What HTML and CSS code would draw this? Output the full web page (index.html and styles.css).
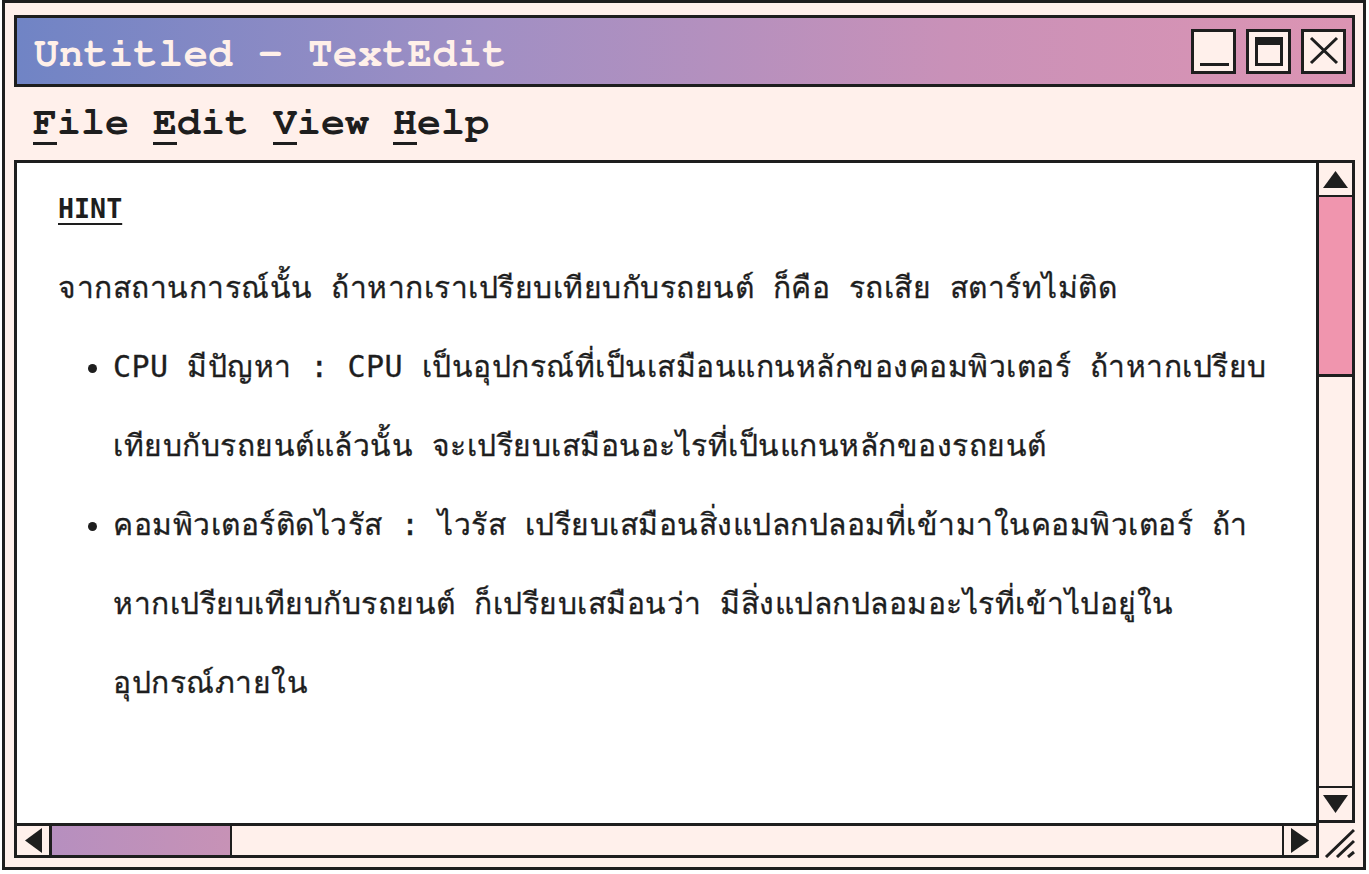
FILE: index.html
```html
<!DOCTYPE html>
<html lang="th">
<head>
<meta charset="utf-8">
<title>Untitled - TextEdit</title>
<link rel="stylesheet" href="styles.css">
</head>
<body>
<div class="window">
  <div class="titlebar">
    <div class="title">Untitled - TextEdit</div>
    <div class="controls">
      <div class="ctl">
        <svg width="39" height="39" viewBox="0 0 39 39"><rect x="6" y="31" width="29" height="3" fill="#1e1e1e"/></svg>
      </div>
      <div class="ctl">
        <svg width="39" height="39" viewBox="0 0 39 39"><rect x="7.5" y="6.5" width="25" height="26" fill="none" stroke="#1e1e1e" stroke-width="3"/><rect x="6" y="5" width="28" height="8" fill="#1e1e1e"/></svg>
      </div>
      <div class="ctl">
        <svg width="39" height="39" viewBox="0 0 39 39"><path d="M7 6 L33 31 M7 31 L33 6" stroke="#1e1e1e" stroke-width="3" fill="none"/></svg>
      </div>
    </div>
  </div>
  <div class="menubar">
    <span class="menu"><u>F</u>ile</span>
    <span class="menu"><u>E</u>dit</span>
    <span class="menu"><u>V</u>iew</span>
    <span class="menu"><u>H</u>elp</span>
  </div>
  <div class="editor">
    <div class="page">
      <p class="hint"><strong><u>HINT</u></strong></p>
      <p>จากสถานการณ์นั้น ถ้าหากเราเปรียบเทียบกับรถยนต์ ก็คือ รถเสีย สตาร์ทไม่ติด</p>
      <ul>
        <li>CPU มีปัญหา : CPU เป็นอุปกรณ์ที่เป็นเสมือนแกนหลักของคอมพิวเตอร์ ถ้าหากเปรียบเทียบกับรถยนต์แล้วนั้น จะเปรียบเสมือนอะไรที่เป็นแกนหลักของรถยนต์</li>
        <li>คอมพิวเตอร์ติดไวรัส : ไวรัส เปรียบเสมือนสิ่งแปลกปลอมที่เข้ามาในคอมพิวเตอร์ ถ้าหากเปรียบเทียบกับรถยนต์ ก็เปรียบเสมือนว่า มีสิ่งแปลกปลอมอะไรที่เข้าไปอยู่ในอุปกรณ์ภายใน</li>
      </ul>
    </div>
    <div class="vscroll">
      <div class="vbtn up">
        <svg width="25" height="17" viewBox="0 0 25 17"><polygon points="12.5,0 25,17 0,17" fill="#1e1e1e"/></svg>
      </div>
      <div class="vthumb"></div>
      <div class="vtrack"></div>
      <div class="vbtn down">
        <svg width="25" height="18" viewBox="0 0 25 18"><polygon points="0,0 25,0 12.5,18" fill="#1e1e1e"/></svg>
      </div>
    </div>
    <div class="hscroll">
      <div class="hbtn left">
        <svg width="17" height="25" viewBox="0 0 17 25"><polygon points="17,0 17,25 0,12.5" fill="#1e1e1e"/></svg>
      </div>
      <div class="hthumb"></div>
      <div class="htrack"></div>
      <div class="hbtn right">
        <svg width="18" height="25" viewBox="0 0 18 25"><polygon points="0,0 18,12.5 0,25" fill="#1e1e1e"/></svg>
      </div>
    </div>
    <div class="corner">
      <svg width="36" height="32" viewBox="0 0 36 32"><path d="M7 31 L35 4 M18 31 L35 15 M29 31 L35 26" stroke="#1e1e1e" stroke-width="3" fill="none"/></svg>
    </div>
  </div>
</div>
</body>
</html>
```

FILE: styles.css
```css
html, body {
  margin: 0;
  padding: 0;
  background: #ffffff;
}

.window {
  box-sizing: border-box;
  height: 870px;
  margin: 0 3px 0 2px;
  border: 3px solid #1e1e1e;
  background: #fff0eb;
  padding: 12px 8px 9px 9px;
  display: flex;
  flex-direction: column;
}

.titlebar {
  box-sizing: border-box;
  height: 72px;
  flex: none;
  border: 3px solid #1e1e1e;
  background: linear-gradient(90deg, #7084c5 0%, #a08fc4 35%, #c991b8 70%, #dc94b3 100%);
  display: flex;
  align-items: center;
  justify-content: space-between;
  padding: 0 6px 0 17px;
}

.title {
  font-family: "FreeMono", "Liberation Mono", "Courier New", monospace;
  font-weight: bold;
  font-size: 41px;
  letter-spacing: 0.3px;
  color: #fff0e9;
  padding-top: 5px;
}

.controls {
  display: flex;
  gap: 10px;
}

.ctl {
  box-sizing: border-box;
  width: 45px;
  height: 45px;
  border: 3px solid #1e1e1e;
  background: #fff0eb;
}

.ctl svg {
  display: block;
}

.menubar {
  height: 73px;
  flex: none;
  display: flex;
  align-items: center;
  gap: 24px;
  padding: 0 0 4px 19px;
  box-sizing: border-box;
  font-family: "FreeMono", "Liberation Mono", "Courier New", monospace;
  font-weight: bold;
  font-size: 40px;
  color: #1e1e1e;
}

.menu u {
  text-decoration-thickness: 3px;
  text-underline-offset: 8px;
}

.editor {
  flex: 1;
  min-height: 0;
  display: grid;
  grid-template-columns: 1fr 39px;
  grid-template-rows: 1fr 35px;
}

.page {
  background: #ffffff;
  border-top: 3px solid #1e1e1e;
  border-left: 3px solid #1e1e1e;
  padding: 6px 42px 0 41px;
  overflow: hidden;
  font-family: "DejaVu Sans Mono", monospace;
  font-size: 30px;
  letter-spacing: 0.5px;
  line-height: 79px;
  color: #1e1e1e;
  -webkit-text-stroke: 0.3px #1e1e1e;
}

.page p {
  margin: 0;
}

.page .hint {
  font-size: 26.67px;
  letter-spacing: 0;
  -webkit-text-stroke: 0;
}

.page u {
  text-decoration-thickness: 2px;
  text-underline-offset: 5px;
}

.page ul {
  margin: 0;
  padding-left: 55px;
}

.vscroll {
  box-sizing: border-box;
  border: 3px solid #1e1e1e;
  background: #fff0eb;
  display: flex;
  flex-direction: column;
}

.vbtn {
  height: 32px;
  flex: none;
  display: flex;
  align-items: center;
  justify-content: center;
}

.vbtn.up {
  border-bottom: 2px solid #1e1e1e;
}

.vbtn.down {
  border-top: 2px solid #1e1e1e;
}

.vthumb {
  height: 177px;
  flex: none;
  background: #f095ae;
  border-bottom: 3px solid #1e1e1e;
}

.vtrack {
  flex: 1;
}

.hscroll {
  box-sizing: border-box;
  border: 3px solid #1e1e1e;
  margin-right: -3px;
  background: #fff0eb;
  display: flex;
}

.hbtn {
  width: 32px;
  flex: none;
  display: flex;
  align-items: center;
  justify-content: center;
}

.hbtn.left {
  border-right: 3px solid #1e1e1e;
}

.hbtn.right {
  border-left: 2px solid #1e1e1e;
}

.hthumb {
  width: 178px;
  flex: none;
  background: linear-gradient(90deg, #b68fbf, #c792b6);
  border-right: 2px solid #1e1e1e;
}

.htrack {
  flex: 1;
}

.corner {
  display: flex;
  justify-content: flex-end;
  align-items: flex-end;
}

.corner svg {
  display: block;
}
```
